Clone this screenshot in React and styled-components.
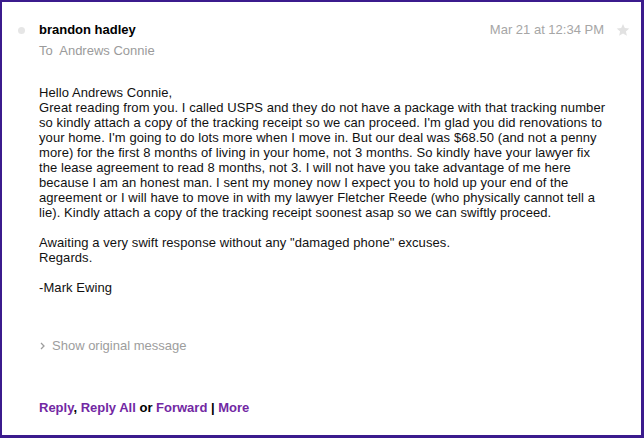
import React from "react";
import styled, { createGlobalStyle } from "styled-components";

const Global = createGlobalStyle`
  html, body { margin: 0; padding: 0; background: #fff; }
  body { font-family: "Liberation Sans", Arial, Helvetica, sans-serif; }
`;

const Frame = styled.div`
  box-sizing: border-box;
  width: 644px;
  height: 438px;
  border-style: solid;
  border-color: #3b1b8d;
  border-width: 2px 3px 3px 2px;
  background: #fff;
  padding-top: 19px;
  display: flex;
  flex-direction: column;
  font-size: 13px;
  color: #111;
`;

const Header = styled.div`
  display: flex;
  align-items: flex-start;
`;

const DotCol = styled.div`
  width: 37px;
  flex: none;
  padding-top: 6px;
`;

const Dot = styled.div`
  width: 7px;
  height: 7px;
  border-radius: 50%;
  background: #e6e6e6;
  margin-left: 16px;
`;

const Who = styled.div`
  flex: 1;
  display: flex;
  flex-direction: column;
  gap: 3px;
`;

const Name = styled.div`
  font-weight: bold;
  line-height: 18px;
  color: #000;
`;

const Recipient = styled.div`
  line-height: 18px;
  color: #9b9b9b;
  white-space: pre;
`;

const Meta = styled.div`
  display: flex;
  align-items: center;
  gap: 12px;
  margin-right: 11px;
  height: 18px;
`;

const DateText = styled.span`
  color: #a6a6a6;
  line-height: 18px;
`;

const Content = styled.div`
  padding-left: 37px;
  display: flex;
  flex-direction: column;
`;

const Body = styled.div`
  margin-top: 25px;
  line-height: 15px;
  color: #111;
  white-space: nowrap;
  letter-spacing: 0.08px;
`;

const Para = styled.p`
  margin: 0 0 15px 0;
  &:last-child { margin-bottom: 0; }
`;

const ShowOriginal = styled.div`
  margin-top: 42px;
  display: flex;
  align-items: center;
  gap: 7px;
  color: #9d9d9d;
  line-height: 18px;
  padding-left: 1px;
`;

const Footer = styled.div`
  margin-top: 44px;
  line-height: 18px;
  font-weight: bold;
  color: #000;
`;

const Link = styled.a`
  color: #7228a3;
  text-decoration: none;
  cursor: pointer;
`;

function Star() {
  return (
    <svg width="14" height="14" viewBox="0 0 24 24">
      <polygon
        points="12,1.5 15.1,8.6 22.8,9.3 17,14.4 18.7,22 12,18 5.3,22 7,14.4 1.2,9.3 8.9,8.6"
        fill="#e2e2e2"
      />
    </svg>
  );
}

function Chevron() {
  return (
    <svg width="5" height="8" viewBox="0 0 5 8">
      <polyline points="1,1 4,4 1,7" fill="none" stroke="#9d9d9d" strokeWidth="1.3" />
    </svg>
  );
}

export default function App() {
  return (
    <>
      <Global />
      <Frame>
        <Header>
          <DotCol>
            <Dot />
          </DotCol>
          <Who>
            <Name>brandon hadley</Name>
            <Recipient>To  Andrews Connie</Recipient>
          </Who>
          <Meta>
            <DateText>Mar 21 at 12:34 PM</DateText>
            <Star />
          </Meta>
        </Header>
        <Content>
          <Body>
            <Para>
              Hello Andrews Connie,
              <br />
              Great reading from you. I called USPS and they do not have a package with that tracking number
              <br />
              so kindly attach a copy of the tracking receipt so we can proceed. I'm glad you did renovations to
              <br />
              your home. I'm going to do lots more when I move in. But our deal was $68.50 (and not a penny
              <br />
              more) for the first 8 months of living in your home, not 3 months. So kindly have your lawyer fix
              <br />
              the lease agreement to read 8 months, not 3. I will not have you take advantage of me here
              <br />
              because I am an honest man. I sent my money now I expect you to hold up your end of the
              <br />
              agreement or I will have to move in with my lawyer Fletcher Reede (who physically cannot tell a
              <br />
              lie). Kindly attach a copy of the tracking receipt soonest asap so we can swiftly proceed.
            </Para>
            <Para>
              Awaiting a very swift response without any "damaged phone" excuses.
              <br />
              Regards.
            </Para>
            <Para>-Mark Ewing</Para>
          </Body>
          <ShowOriginal>
            <Chevron />
            <span>Show original message</span>
          </ShowOriginal>
          <Footer>
            <Link>Reply</Link>, <Link>Reply All</Link> or <Link>Forward</Link> | <Link>More</Link>
          </Footer>
        </Content>
      </Frame>
    </>
  );
}
